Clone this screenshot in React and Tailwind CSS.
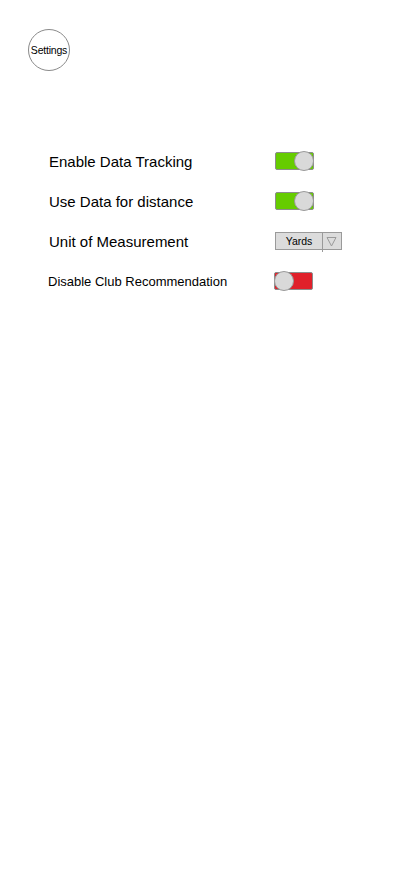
import React from "react";

function Toggle({ on }) {
  return (
    <div
      className={`relative h-[18px] w-[39px] rounded-[2px] border border-[#8c8c8c] ${
        on ? "bg-[#66cc00]" : "bg-[#e0202a]"
      }`}
    >
      <div
        className={`absolute top-[-2px] h-[20px] w-[20px] rounded-full border border-[#9a9a9a] bg-[#d9d9d9] ${
          on ? "right-[-1px]" : "left-[-1px]"
        }`}
      />
    </div>
  );
}

export default function App() {
  return (
    <div
      className="min-h-[896px] w-[414px] bg-white text-black"
      style={{ fontFamily: '"Liberation Sans", Arial, sans-serif' }}
    >
      <div className="pl-[28px] pt-[29px]">
        <div className="flex h-[42px] w-[42px] items-center justify-center rounded-full border border-[#8a8a8a] pt-[2px] text-[10.5px] tracking-[-0.2px]">
          Settings
        </div>
      </div>
      <div className="mt-[70px] flex flex-col">
        <div className="flex h-[40px] items-center pl-[49px]">
          <div className="w-[226px] pt-[2px] text-[15px]">Enable Data Tracking</div>
          <Toggle on />
        </div>
        <div className="flex h-[40px] items-center pl-[49px]">
          <div className="w-[226px] pt-[2px] text-[15px]">Use Data for distance</div>
          <Toggle on />
        </div>
        <div className="flex h-[40px] items-center pl-[49px]">
          <div className="w-[226px] pt-[2px] text-[15px]">Unit of Measurement</div>
          <div className="relative flex h-[18px] w-[67px] border border-[#9a9a9a] bg-[#dcdcdc]">
            <div className="flex w-[46px] items-center justify-center pt-[1px] text-[10.5px]">Yards</div>
            <div className="relative flex flex-1 items-center justify-center">
              <div className="absolute left-0 top-0 h-[19px] w-px bg-[#9a9a9a]" />
              <svg width="11" height="11" viewBox="0 0 11 11">
                <path d="M1 1.5 H10 L5.5 10 Z" fill="none" stroke="#9a9a9a" strokeWidth="1" />
              </svg>
            </div>
          </div>
        </div>
        <div className="flex h-[40px] items-center pl-[48px]">
          <div className="w-[226px] pt-[2px] text-[13px]">Disable Club Recommendation</div>
          <Toggle on={false} />
        </div>
      </div>
    </div>
  );
}
